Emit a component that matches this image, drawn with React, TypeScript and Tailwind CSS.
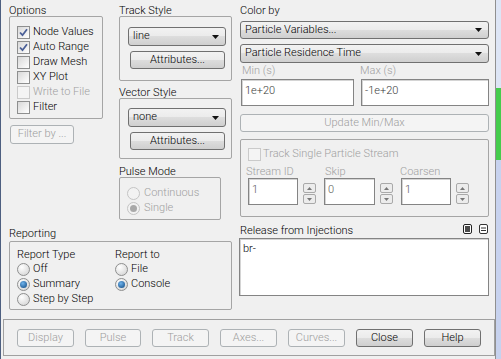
import clsx from "clsx";
import type { ReactNode } from "react";

const BTN = "bg-[linear-gradient(#f2f2f2_0%,#ebebeb_50%,#dddddd_50%,#cfcfcf_100%)] border-[#707070]";
const BOX = "rounded-[2px] border border-[#a5a5a5]";

function Button({ label, disabled, className }: { label: string; disabled?: boolean; className?: string }) {
    return (
        <div
            className={clsx(
                "flex items-center justify-center rounded-[3px] border",
                disabled ? "border-[#adb2b5] bg-[#f4f4f4] text-[#9d9d9d]" : BTN + " text-black",
                className
            )}
        >
            {label}
        </div>
    );
}

function Select({ value, className }: { value: string; className?: string }) {
    return (
        <div className={clsx("flex items-center justify-between rounded-[3px] border pl-[4px] pr-[6px]", BTN, className)}>
            <span>{value}</span>
            <svg width="7" height="4" viewBox="0 0 7 4">
                <path d="M0 0h7L3.5 4z" fill="#111" />
            </svg>
        </div>
    );
}

function Check({ checked, disabled }: { checked?: boolean; disabled?: boolean }) {
    return (
        <span
            className={clsx(
                "flex h-[13px] w-[13px] shrink-0 items-center justify-center border",
                disabled ? "border-[#cacaca] bg-[#f4f4f4]" : "border-[#8e8f8f] bg-[linear-gradient(135deg,#d8d8d8,#ffffff)]"
            )}
        >
            {checked && (
                <svg width="9" height="9" viewBox="0 0 9 9">
                    <path d="M1 4.5L3.5 7.2L8 1.2" stroke="#4a5f97" strokeWidth="1.8" fill="none" />
                </svg>
            )}
        </span>
    );
}

function Radio({ on, disabled }: { on?: boolean; disabled?: boolean }) {
    return (
        <span
            className={clsx(
                "flex h-[13px] w-[13px] shrink-0 items-center justify-center rounded-full border",
                disabled
                    ? "border-[#c4c4c4] bg-[#f2f2f2]"
                    : "border-[#8e8f8f] bg-[radial-gradient(circle_at_35%_30%,#ffffff,#cfcfcf)]"
            )}
        >
            {on && (
                <span
                    className={clsx(
                        "h-[7px] w-[7px] rounded-full",
                        disabled ? "bg-[#a9a9a9]" : "bg-[radial-gradient(circle_at_40%_35%,#6fb3ec,#0d467f)]"
                    )}
                />
            )}
        </span>
    );
}

function Row({ children, disabled }: { children: ReactNode; disabled?: boolean }) {
    return (
        <div className={clsx("flex h-[15px] items-center gap-[3px] pt-[1px]", disabled && "text-[#a0a0a0]")}>{children}</div>
    );
}

function Field({ value, className }: { value: string; className?: string }) {
    return (
        <div
            className={clsx(
                "border border-[#848484] bg-white pl-[3px] pt-[4px] leading-[14px] shadow-[inset_1px_1px_0_#d4d4d4]",
                className
            )}
        >
            {value}
        </div>
    );
}

function Spin() {
    return (
        <div className="ml-[5px] mt-[5px] flex flex-col gap-[1px]">
            <div className="flex h-[10px] w-[13px] items-center justify-center rounded-[2px] border border-[#a9a9a9] bg-[#ececec]">
                <svg width="5" height="3" viewBox="0 0 5 3">
                    <path d="M0 3h5L2.5 0z" fill="#777" />
                </svg>
            </div>
            <div className="flex h-[10px] w-[13px] items-center justify-center rounded-[2px] border border-[#a9a9a9] bg-[#ececec]">
                <svg width="5" height="3" viewBox="0 0 5 3">
                    <path d="M0 0h5L2.5 3z" fill="#777" />
                </svg>
            </div>
        </div>
    );
}

function Label({ children, className }: { children: ReactNode; className?: string }) {
    return <div className={clsx("h-[12px] leading-[14px]", className)}>{children}</div>;
}

export default function App() {
    return (
        <div className="flex h-[359px] w-[501px] overflow-hidden bg-[#f0f0f0] font-['Roboto','Liberation_Sans',sans-serif] text-[11px] font-light text-black">
            <div className="w-px bg-[#4d5f80]" />
            <div className="flex w-[495px] flex-col border-r border-[#8f8f8f]">
                <div className="flex h-[319px] pl-[8px] pt-[4px]">
                    {/* left part */}
                    <div className="flex w-[223px] flex-col">
                        <div className="flex gap-[16px]">
                            <div className="flex w-[94px] flex-col">
                                <Label>Options</Label>
                                <div className={clsx(BOX, "h-[103px] pl-[7px] pt-[7px]")}>
                                    <Row><Check checked />Node Values</Row>
                                    <Row><Check checked />Auto Range</Row>
                                    <Row><Check />Draw Mesh</Row>
                                    <Row><Check />XY Plot</Row>
                                    <Row disabled><Check disabled />Write to File</Row>
                                    <Row><Check />Filter</Row>
                                </div>
                                <Button label="Filter by ..." disabled className="ml-[1px] mt-[6px] h-[19px] w-[64px]" />
                            </div>

                            <div className="flex w-[113px] flex-col">
                                <Label>Track Style</Label>
                                <div className={clsx(BOX, "h-[65px] pl-[8px] pt-[10px]")}>
                                    <Select value="line" className="h-[19px] w-[98px]" />
                                    <Button label="Attributes..." className="ml-[2px] mt-[5px] h-[18px] w-[95px]" />
                                </div>
                                <Label className="mt-[5px]">Vector Style</Label>
                                <div className={clsx(BOX, "h-[61px] pl-[8px] pt-[9px]")}>
                                    <Select value="none" className="h-[19px] w-[98px]" />
                                    <Button label="Attributes..." className="ml-[2px] mt-[5px] h-[18px] w-[95px]" />
                                </div>
                                <Label className="mt-[6px]">Pulse Mode</Label>
                                <div className={clsx(BOX, "h-[43px] w-[102px] pl-[7px] pt-[7px] text-[#a0a0a0]")}>
                                    <Row><Radio disabled /><span className="ml-[1px]">Continuous</span></Row>
                                    <Row><Radio on disabled /><span className="ml-[1px]">Single</span></Row>
                                </div>
                            </div>
                        </div>

                        <Label className="mt-[7px] h-[14px]">Reporting</Label>
                        <div className={clsx(BOX, "flex h-[69px] pl-[7px] pt-[5px]")}>
                            <div className="w-[98px]">
                                <div className="h-[14px] leading-[16px]">Report Type</div>
                                <Row><Radio />Off</Row>
                                <Row><Radio on />Summary</Row>
                                <Row><Radio />Step by Step</Row>
                            </div>
                            <div>
                                <div className="h-[14px] leading-[16px]">Report to</div>
                                <Row><Radio />File</Row>
                                <Row><Radio on />Console</Row>
                            </div>
                        </div>
                    </div>

                    {/* right part */}
                    <div className="ml-[7px] flex w-[250px] flex-col">
                        <Label className="ml-[1px]">Color by</Label>
                        <Select value="Particle Variables..." className="ml-[1px] mt-[5px] h-[18px] w-[249px]" />
                        <Select value="Particle Residence Time" className="ml-[1px] mt-[5px] h-[19px] w-[249px]" />
                        <div className="flex h-[16px] pt-[2px] leading-[12px] text-[#a0a0a0]">
                            <span className="ml-[3px] w-[118px]">Min (s)</span>
                            <span>Max (s)</span>
                        </div>
                        <div className="flex text-[#3a3a3a]">
                            <Field value="1e+20" className="ml-[2px] h-[27px] w-[113px]" />
                            <Field value="-1e+20" className="ml-[7px] h-[27px] w-[128px]" />
                        </div>
                        <Button label="Update Min/Max" disabled className="ml-[1px] mt-[8px] h-[18px] w-[249px]" />
                        <div className={clsx(BOX, "ml-[1px] mt-[7px] h-[78px] w-[249px] pl-[7px] pt-[7px] text-[#a0a0a0]")}>
                            <div className="flex h-[13px] items-center gap-[2px] pt-[1px]">
                                <Check disabled />
                                <span>Track Single Particle Stream</span>
                            </div>
                            <div className="flex h-[18px] pt-[6px] leading-[12px]">
                                <span className="-ml-[2px] w-[79px]">Stream ID</span>
                                <span className="w-[75px]">Skip</span>
                                <span>Coarsen</span>
                            </div>
                            <div className="flex text-[#5a5a5a]">
                                <Field value="1" className="h-[27px] w-[50px]" />
                                <Spin />
                                <Field value="0" className="ml-[8px] h-[27px] w-[51px]" />
                                <Spin />
                                <Field value="1" className="ml-[8px] h-[27px] w-[50px]" />
                                <Spin />
                            </div>
                        </div>
                        <div className="mt-[7px] flex h-[14px] items-start justify-between">
                            <span className="ml-[1px] leading-[14px]">Release from Injections</span>
                            <div className="mr-[1px] flex gap-[7px]">
                                <svg width="9" height="10" viewBox="0 0 9 10">
                                    <rect x="0.5" y="0.5" width="8" height="9" rx="1.5" fill="#fff" stroke="#222" />
                                    <path d="M2 3h5M2 5h5M2 7h5" stroke="#111" strokeWidth="1.3" />
                                </svg>
                                <svg width="9" height="10" viewBox="0 0 9 10">
                                    <rect x="0.5" y="0.5" width="8" height="9" rx="1.5" fill="#fff" stroke="#333" />
                                    <path d="M2 4h5M2 6.5h5" stroke="#333" strokeWidth="1" />
                                </svg>
                            </div>
                        </div>
                        <div className="h-[58px] w-[250px] border border-[#848484] bg-white pl-[3px] pt-[2px] shadow-[inset_1px_1px_0_#d4d4d4]">
                            br-
                        </div>
                    </div>
                </div>

                <div className="ml-[2px] flex h-[37px] w-[492px] gap-[11px] border border-[#a0a0a0] pl-[13px] pt-[9px]">
                    <Button label="Display" disabled className="h-[18px] w-[57px]" />
                    <Button label="Pulse" disabled className="h-[18px] w-[56px]" />
                    <Button label="Track" disabled className="h-[18px] w-[57px]" />
                    <Button label="Axes..." disabled className="h-[18px] w-[57px]" />
                    <Button label="Curves..." disabled className="h-[18px] w-[57px]" />
                    <Button label="Close" className="h-[18px] w-[57px]" />
                    <Button label="Help" className="h-[18px] w-[57px]" />
                </div>
            </div>
            <div className="flex w-[5px] flex-col bg-[#c7d2ee]">
                <div className="h-[88px] bg-[#dde5f5]" />
                <div className="h-[72px] bg-[#45cc4c]" />
            </div>
        </div>
    );
}
